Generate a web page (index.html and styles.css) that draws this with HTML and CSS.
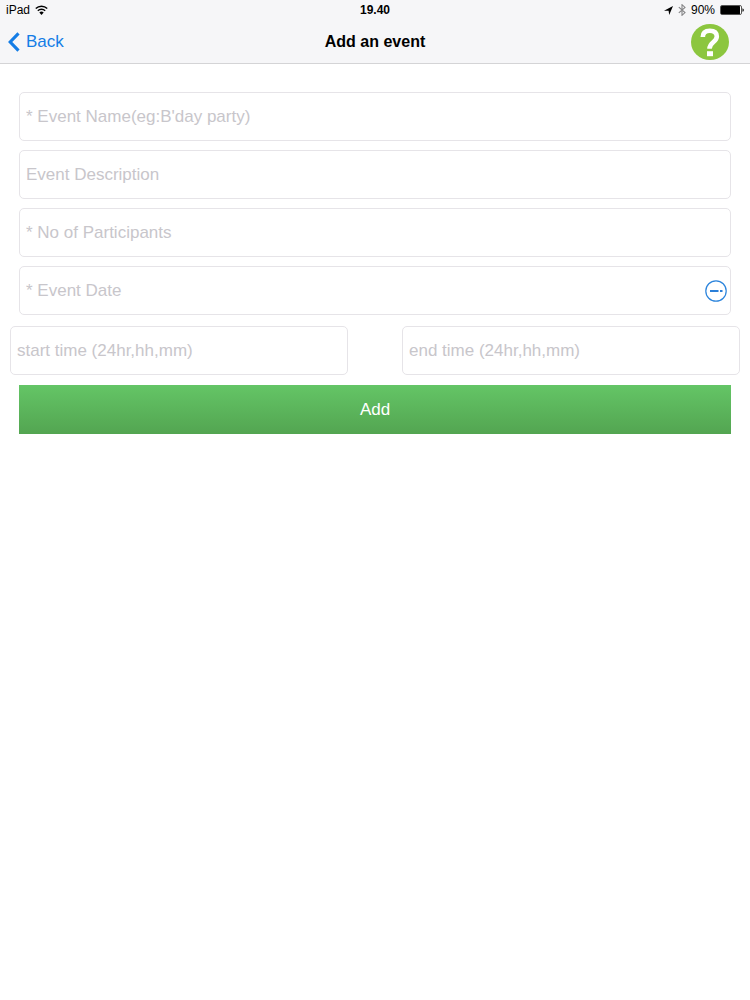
FILE: index.html
```html
<!DOCTYPE html>
<html lang="en">
<head>
<meta charset="utf-8">
<meta name="viewport" content="width=device-width, initial-scale=1">
<title>Add an event</title>
<link rel="stylesheet" href="styles.css">
</head>
<body>
<header class="top">
  <div class="status">
    <div class="status-left">
      <span>iPad</span>
      <svg viewBox="0 0 12 9" width="13" height="10" aria-hidden="true">
        <path d="M.7 3.200a7.600 7.600 0 0 1 10.600 0M2.600 5.200a4.900 4.900 0 0 1 6.800 0" fill="none" stroke="#000" stroke-width="1.300"/>
        <path d="M6 9 4 6.900a2.900 2.900 0 0 1 4 0z"/>
      </svg>
    </div>
    <span class="clock">19.40</span>
    <div class="status-right">
      <svg viewBox="0 0 9 9" width="9" height="9" aria-hidden="true"><path d="M9 0 5.200 9 4.600 4.800 0 4.800z"/></svg>
      <svg viewBox="0 0 8 12" width="8" height="12" aria-hidden="true"><path d="M.8 3.200 7 8.600 4 11.300V.7l3 2.700L.8 8.800" fill="none" stroke="#858587" stroke-width="1.100"/></svg>
      <span>90%</span>
      <svg viewBox="0 0 24 10" width="24" height="10" aria-hidden="true">
        <rect x=".5" y=".5" width="21" height="9" rx="1.500" fill="#fff" stroke="#555"/>
        <rect x="1" y="1" width="19" height="8" rx=".5"/>
        <path d="M22.500 3.200q1.300.4 1.300 1.800t-1.300 1.800z"/>
      </svg>
    </div>
  </div>
  <nav class="nav">
    <a class="back" href="#">
      <svg viewBox="0 0 12 20" width="12" height="20" aria-hidden="true"><path d="M10.500 1.400 2.200 10l8.300 8.600" fill="none" stroke="#147de6" stroke-width="3.100"/></svg>
      <span>Back</span>
    </a>
    <h1 class="title">Add an event</h1>
    <button class="help" type="button" aria-label="Help">
      <svg viewBox="0 0 38 36" width="38" height="36" aria-hidden="true">
        <ellipse cx="19" cy="18" rx="19" ry="18" fill="#8cc63f"/>
        <path d="M11.800 13C11.800 8.800 14.500 6.800 18.800 6.800s7 2 7 5.800c0 5.600-7.300 5.200-7.300 12.200" fill="none" stroke="#fff" stroke-width="4.600"/>
        <path d="M16 27.200h6v5h-6z" fill="#fff"/>
      </svg>
    </button>
  </nav>
</header>
<main>
  <form class="form">
    <div class="fields">
      <input class="field" type="text" aria-label="Event name" placeholder="* Event Name(eg:B'day party)">
      <input class="field" type="text" aria-label="Event description" placeholder="Event Description">
      <input class="field" type="text" aria-label="Number of participants" placeholder="* No of Participants">
      <div class="date">
        <input class="field" type="text" aria-label="Event date" placeholder="* Event Date">
        <button class="pick" type="button" aria-label="Choose date">
          <svg viewBox="0 0 22 22" width="22" height="22" aria-hidden="true">
            <circle cx="11" cy="11" r="10.200" fill="none" stroke="#2b84dc" stroke-width="1.200"/>
            <path d="M5 11h8.500M15 11h2.500" stroke="#2b7fd8" stroke-width="2.200"/>
          </svg>
        </button>
      </div>
    </div>
    <div class="times">
      <input class="field" type="text" aria-label="Start time" placeholder="start time (24hr,hh,mm)">
      <input class="field" type="text" aria-label="End time" placeholder="end time (24hr,hh,mm)">
    </div>
    <button class="add" type="submit">Add</button>
  </form>
</main>
</body>
</html>
```
FILE: styles.css
```css
* {
  box-sizing: border-box;
}

body {
  margin: 0;
  background: #fff;
  color: #000;
  font-family: "Liberation Sans", Arial, sans-serif;
}

svg {
  display: block;
}

.top {
  background: #f6f6f8;
  border-bottom: 1px solid #d4d4d6;
}

.status,
.nav {
  display: grid;
  grid-template-columns: 1fr auto 1fr;
  align-items: center;
}

.status {
  height: 20px;
  padding: 0 6px;
  font-size: 12px;
}

.status-left,
.status-right {
  display: flex;
  align-items: center;
  gap: 5px;
}

.status-right {
  justify-content: flex-end;
}

.clock {
  font-weight: bold;
}

.nav {
  height: 43px;
  padding: 0 8px;
}

.back {
  display: flex;
  align-items: center;
  gap: 6px;
  color: #147de6;
  font-size: 17px;
  text-decoration: none;
}

.title {
  margin: 0;
  font-size: 16px;
  font-weight: bold;
}

.help {
  justify-self: end;
  margin-right: 13px;
  padding: 0;
  border: 0;
  background: none;
}

.form {
  display: flex;
  flex-direction: column;
  padding: 28px 10px;
}

.fields {
  display: flex;
  flex-direction: column;
  gap: 9px;
  margin: 0 9px 11px;
}

.field {
  display: block;
  width: 100%;
  height: 49px;
  padding: 0 6px;
  border: 1px solid #e6e4e8;
  border-radius: 5px;
  background: #fff;
  color: #000;
  font: 17px "Liberation Sans", Arial, sans-serif;
}

.field::placeholder {
  color: #c8c6cb;
}

.date {
  position: relative;
}

.pick {
  position: absolute;
  top: 14px;
  right: 4px;
  padding: 0;
  border: 0;
  background: none;
}

.times {
  display: grid;
  grid-template-columns: 1fr 1fr;
  gap: 54px;
  margin-bottom: 10px;
}

.add {
  height: 49px;
  margin: 0 9px;
  border: 0;
  background: linear-gradient(#64c566, #53a551);
  color: #fff;
  font: 17px "Liberation Sans", Arial, sans-serif;
}
```
